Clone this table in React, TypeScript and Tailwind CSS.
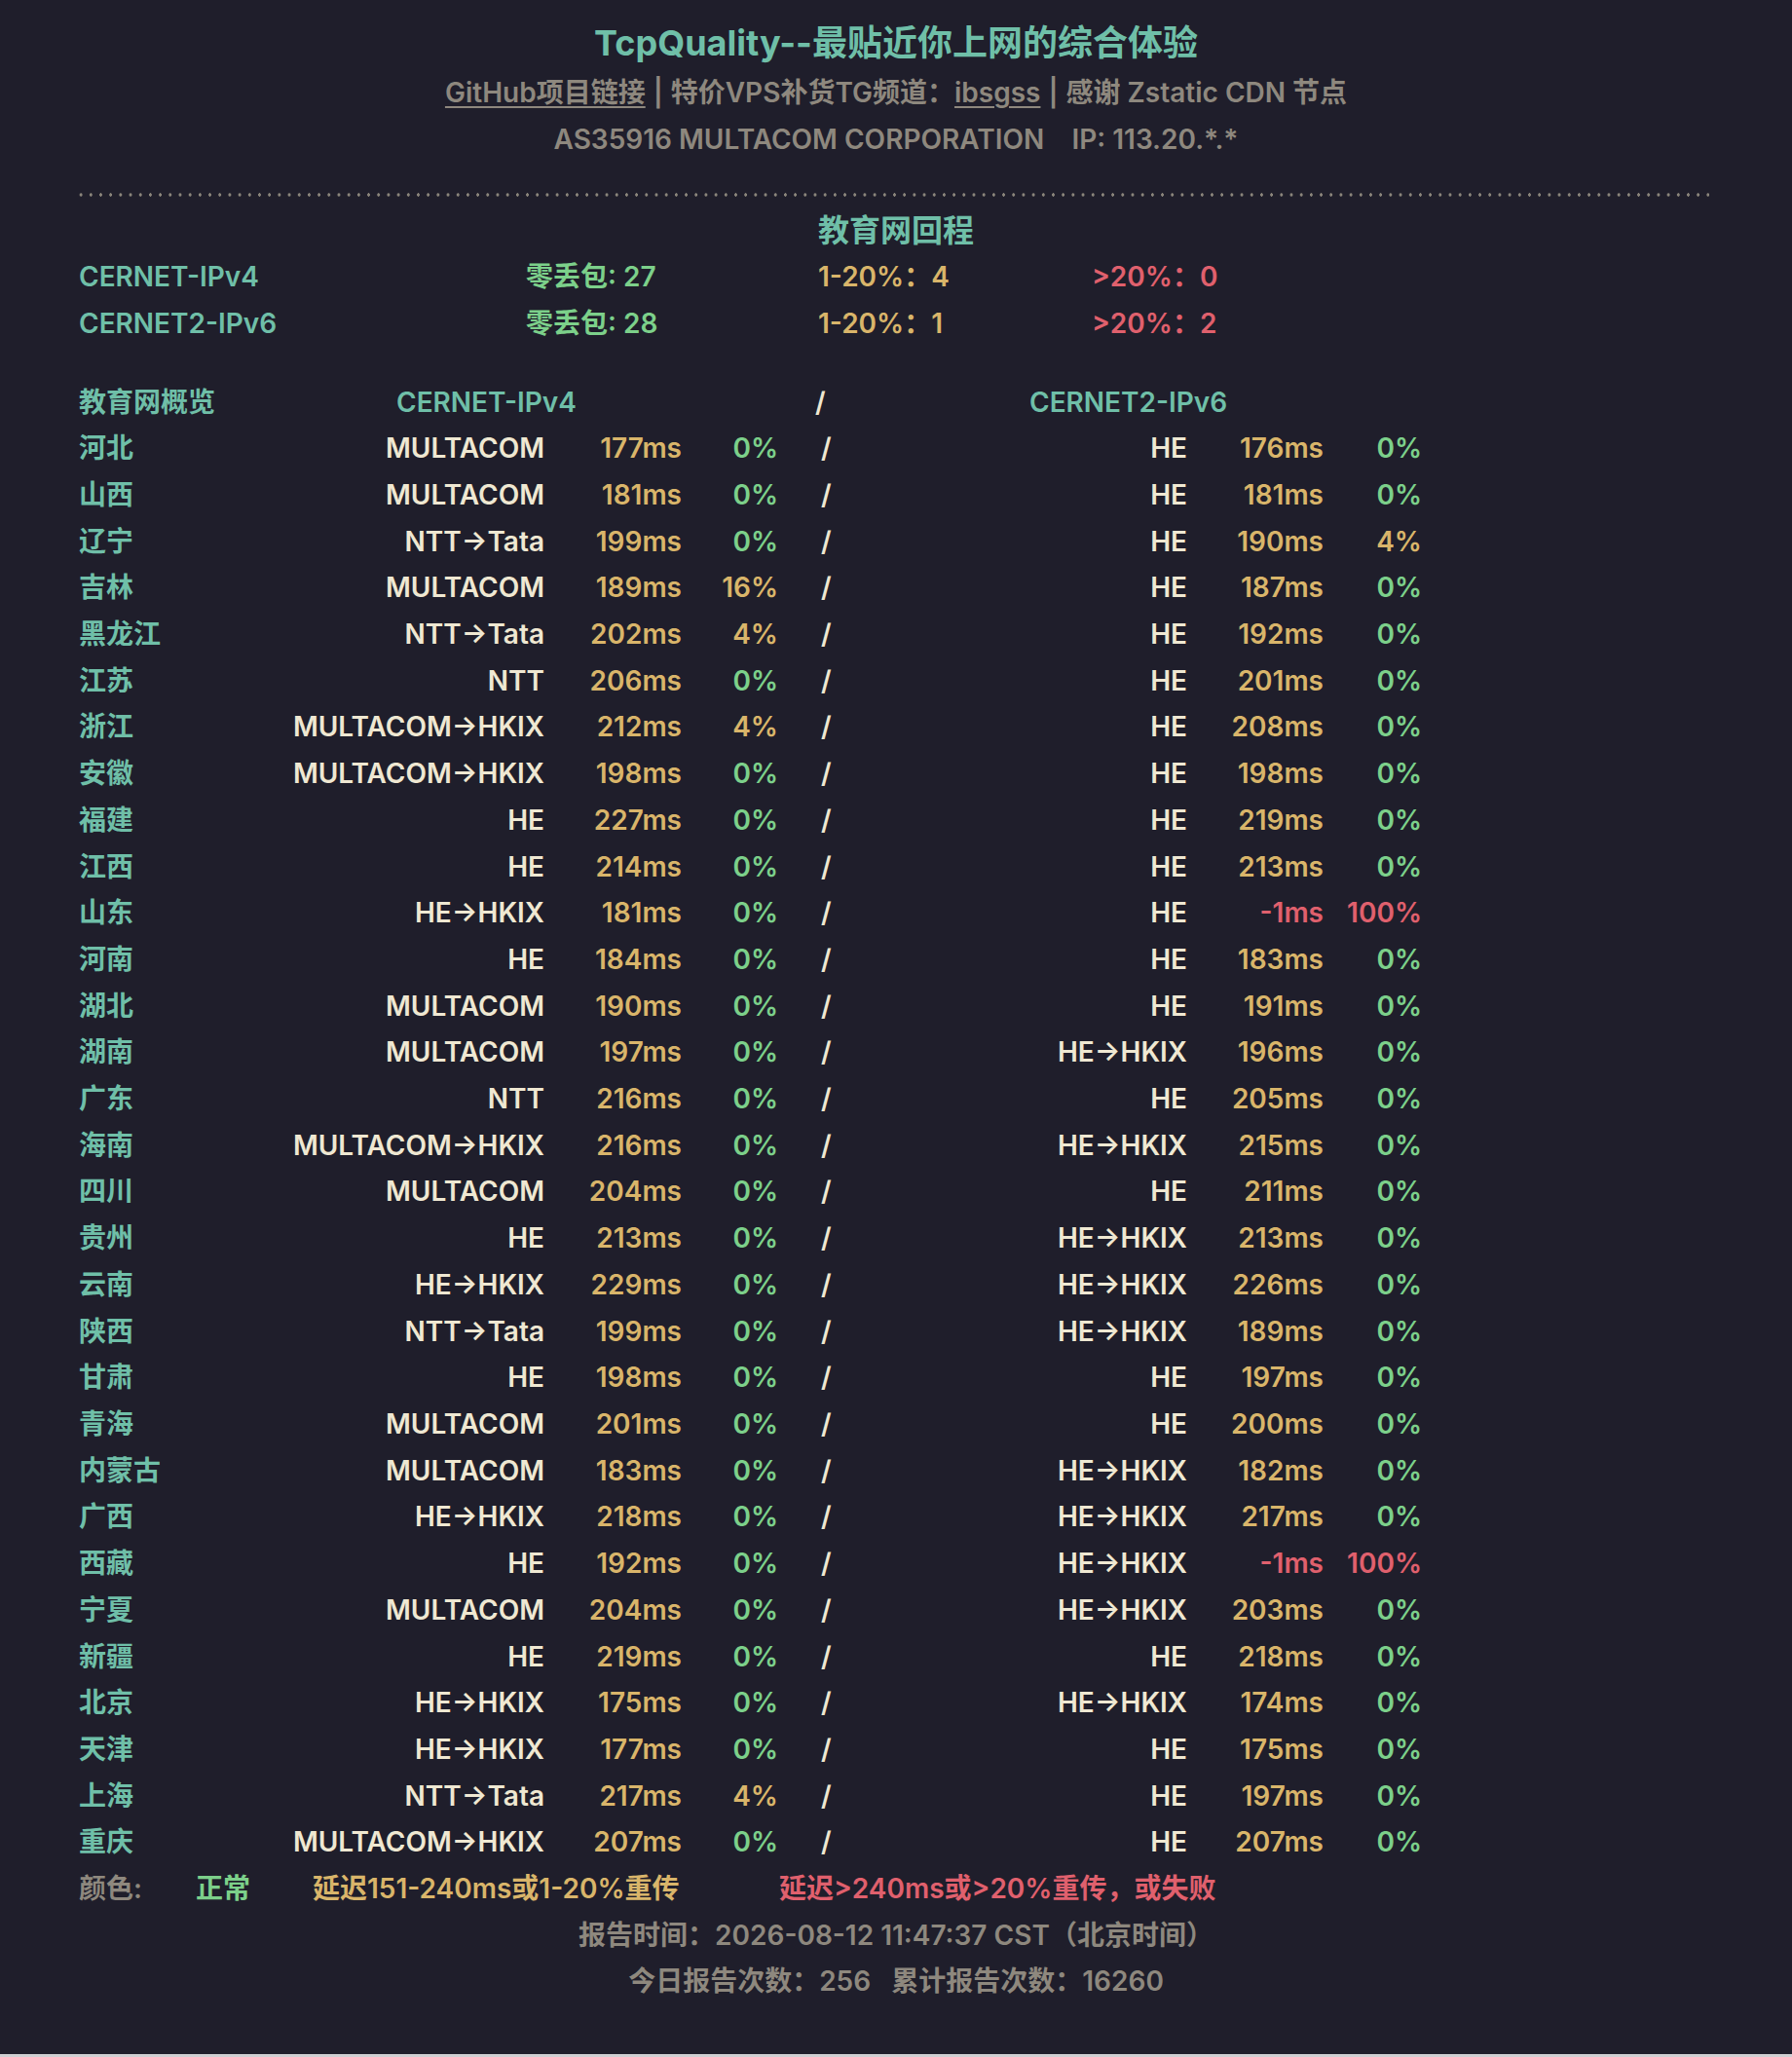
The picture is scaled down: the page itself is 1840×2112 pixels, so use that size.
import React from "react";

type Row = [string, string, string, string, string, string, string];

const rows: Row[] = [
  ["河北", "MULTACOM", "177ms", "0%", "HE", "176ms", "0%"],
  ["山西", "MULTACOM", "181ms", "0%", "HE", "181ms", "0%"],
  ["辽宁", "NTT→Tata", "199ms", "0%", "HE", "190ms", "4%"],
  ["吉林", "MULTACOM", "189ms", "16%", "HE", "187ms", "0%"],
  ["黑龙江", "NTT→Tata", "202ms", "4%", "HE", "192ms", "0%"],
  ["江苏", "NTT", "206ms", "0%", "HE", "201ms", "0%"],
  ["浙江", "MULTACOM→HKIX", "212ms", "4%", "HE", "208ms", "0%"],
  ["安徽", "MULTACOM→HKIX", "198ms", "0%", "HE", "198ms", "0%"],
  ["福建", "HE", "227ms", "0%", "HE", "219ms", "0%"],
  ["江西", "HE", "214ms", "0%", "HE", "213ms", "0%"],
  ["山东", "HE→HKIX", "181ms", "0%", "HE", "-1ms", "100%"],
  ["河南", "HE", "184ms", "0%", "HE", "183ms", "0%"],
  ["湖北", "MULTACOM", "190ms", "0%", "HE", "191ms", "0%"],
  ["湖南", "MULTACOM", "197ms", "0%", "HE→HKIX", "196ms", "0%"],
  ["广东", "NTT", "216ms", "0%", "HE", "205ms", "0%"],
  ["海南", "MULTACOM→HKIX", "216ms", "0%", "HE→HKIX", "215ms", "0%"],
  ["四川", "MULTACOM", "204ms", "0%", "HE", "211ms", "0%"],
  ["贵州", "HE", "213ms", "0%", "HE→HKIX", "213ms", "0%"],
  ["云南", "HE→HKIX", "229ms", "0%", "HE→HKIX", "226ms", "0%"],
  ["陕西", "NTT→Tata", "199ms", "0%", "HE→HKIX", "189ms", "0%"],
  ["甘肃", "HE", "198ms", "0%", "HE", "197ms", "0%"],
  ["青海", "MULTACOM", "201ms", "0%", "HE", "200ms", "0%"],
  ["内蒙古", "MULTACOM", "183ms", "0%", "HE→HKIX", "182ms", "0%"],
  ["广西", "HE→HKIX", "218ms", "0%", "HE→HKIX", "217ms", "0%"],
  ["西藏", "HE", "192ms", "0%", "HE→HKIX", "-1ms", "100%"],
  ["宁夏", "MULTACOM", "204ms", "0%", "HE→HKIX", "203ms", "0%"],
  ["新疆", "HE", "219ms", "0%", "HE", "218ms", "0%"],
  ["北京", "HE→HKIX", "175ms", "0%", "HE→HKIX", "174ms", "0%"],
  ["天津", "HE→HKIX", "177ms", "0%", "HE", "175ms", "0%"],
  ["上海", "NTT→Tata", "217ms", "4%", "HE", "197ms", "0%"],
  ["重庆", "MULTACOM→HKIX", "207ms", "0%", "HE", "207ms", "0%"],
];

const TEAL = "text-[#6fbfa8]";
const CREAM = "text-[#efe8d2]";
const YELLOW = "text-[#d9b56a]";
const GREEN = "text-[#7cd08a]";
const RED = "text-[#e0606d]";
const GRAY = "text-[#8e887e]";

function latClass(v: string) {
  return v.startsWith("-") ? RED : YELLOW;
}
function lossClass(v: string) {
  if (v === "0%") return GREEN;
  if (v === "100%") return RED;
  return YELLOW;
}

export default function App() {
  return (
    <div className="min-h-[2112px] bg-[#1f1e2b] font-['Inter','Noto_Sans_CJK_SC',sans-serif] font-semibold text-[28px] leading-[47.7px] pt-[16px]">
      <div className={`text-center text-[36px] font-bold h-[56px] leading-[56px] ${TEAL}`}>
        TcpQuality--最贴近你上网的综合体验
      </div>
      <div className={`text-center ${GRAY}`}>
        <span className="underline underline-offset-4 decoration-2">GitHub项目链接</span>
        <span className="mx-[8px]">|</span>
        特价VPS补货TG频道：
        <span className="underline underline-offset-4 decoration-2">ibsgss</span>
        <span className="mx-[8px]">|</span>
        感谢 Zstatic CDN 节点
      </div>
      <div className={`text-center ${GRAY}`}>
        AS35916 MULTACOM CORPORATION&nbsp;&nbsp;&nbsp;&nbsp;IP: 113.20.*.*
      </div>
      <div className="ml-[78px] w-[1677px] h-[4px] mt-[31px] bg-[radial-gradient(circle,#8a857b_1.6px,transparent_1.8px)] bg-[length:10.2px_4px] bg-repeat-x" />
      <div className={`text-center mt-[11px] text-[32px] ${TEAL}`}>教育网回程</div>
      <div className="pl-[81px]">
        <div className="flex">
          <div className={`w-[459px] ${TEAL}`}>CERNET-IPv4</div>
          <div className={`w-[300px] ${GREEN}`}>零丢包: 27</div>
          <div className={`w-[281px] ${YELLOW}`}>1-20%：4</div>
          <div className={RED}>&gt;20%：0</div>
        </div>
        <div className="flex">
          <div className={`w-[459px] ${TEAL}`}>CERNET2-IPv6</div>
          <div className={`w-[300px] ${GREEN}`}>零丢包: 28</div>
          <div className={`w-[281px] ${YELLOW}`}>1-20%：1</div>
          <div className={RED}>&gt;20%：2</div>
        </div>
        <div className="flex mt-[33px]">
          <div className={`w-[326px] ${TEAL}`}>教育网概览</div>
          <div className={`w-[430px] ${TEAL}`}>CERNET-IPv4</div>
          <div className={`w-[220px] ${CREAM}`}>/</div>
          <div className={TEAL}>CERNET2-IPv6</div>
        </div>
        {rows.map((r) => (
          <div key={r[0]} className="flex">
            <div className={`w-[200px] ${TEAL}`}>{r[0]}</div>
            <div className={`w-[278px] text-right ${CREAM}`}>{r[1]}</div>
            <div className={`w-[141px] text-right ${latClass(r[2])}`}>{r[2]}</div>
            <div className={`w-[99px] text-right ${lossClass(r[3])}`}>{r[3]}</div>
            <div className={`w-[58px] pl-[44px] ${CREAM}`}>/</div>
            <div className={`w-[362px] text-right ${CREAM}`}>{r[4]}</div>
            <div className={`w-[140px] text-right ${latClass(r[5])}`}>{r[5]}</div>
            <div className={`w-[101px] text-right ${lossClass(r[6])}`}>{r[6]}</div>
          </div>
        ))}
        <div className="flex">
          <div className={`w-[120px] ${GRAY}`}>颜色:</div>
          <div className={`w-[120px] ${GREEN}`}>正常</div>
          <div className={`w-[479px] ${YELLOW}`}>延迟151-240ms或1-20%重传</div>
          <div className={RED}>延迟&gt;240ms或&gt;20%重传，或失败</div>
        </div>
      </div>
      <div className={`text-center ${GRAY}`}>报告时间：2026-08-12 11:47:37 CST（北京时间）</div>
      <div className={`text-center ${GRAY}`}>今日报告次数：256&nbsp;&nbsp;&nbsp;累计报告次数：16260</div>
      <div className="h-[3px] bg-[#cfcfd2] mt-[50px]" />
    </div>
  );
}
